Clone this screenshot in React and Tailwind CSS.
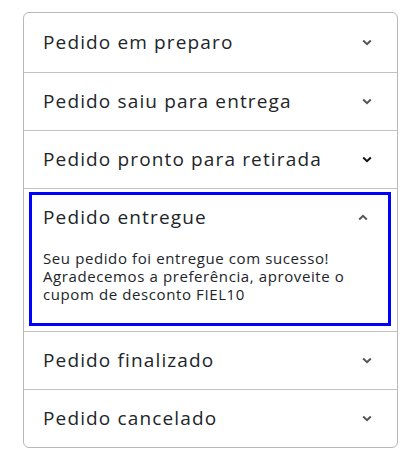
import React from "react";

const Chevron = ({ up = false, dark = false }) => (
  <svg width="10" height="7" viewBox="0 0 10 7" className={dark ? "text-[#111]" : "text-[#555]"}>
    <path
      d={up ? "M1.2 5.5 L5 1.8 L8.8 5.5" : "M1.2 1.5 L5 5.2 L8.8 1.5"}
      fill="none"
      stroke="currentColor"
      strokeWidth="2"
    />
  </svg>
);

const Row = ({ title, first = false, last = false, dark = false }) => (
  <div
    className={`flex items-center justify-between pl-[19px] pr-[25px] ${first ? "h-[60px]" : last ? "h-[57px]" : "h-[58px]"} ${last ? "" : "border-b border-[#c2c2c2]"}`}
  >
    <span className="text-[19px] tracking-[0.06em] text-[#212529]">{title}</span>
    <Chevron dark={dark} />
  </div>
);

export default function App() {
  return (
    <div className="w-[408px] h-[462px] bg-white pt-[12px] pl-[23px]" style={{ fontFamily: '"Open Sans", sans-serif' }}>
      <div className="w-[375px] border border-[#b8b8b8] rounded-[6px] overflow-hidden">
        <Row title="Pedido em preparo" first />
        <Row title="Pedido saiu para entrega" />
        <Row title="Pedido pronto para retirada" dark />
        <div className="border-b border-[#c2c2c2] pt-[3px] pb-[5px] pl-[5px] pr-[6px]">
          <div className="h-[134px] border-[3px] border-[#0000ff] pl-[11px] pr-[20px] pt-[10px]">
            <div className="flex items-center justify-between h-[24px]">
              <span className="text-[19px] tracking-[0.06em] text-[#212529]">Pedido entregue</span>
              <Chevron up />
            </div>
            <p className="mt-[20px] text-[15px] leading-[18px] tracking-[0.04em] text-[#212529]">
              Seu pedido foi entregue com sucesso!
              <br />
              Agradecemos a preferência, aproveite o
              <br />
              cupom de desconto FIEL10
            </p>
          </div>
        </div>
        <Row title="Pedido finalizado" />
        <Row title="Pedido cancelado" last />
      </div>
    </div>
  );
}
